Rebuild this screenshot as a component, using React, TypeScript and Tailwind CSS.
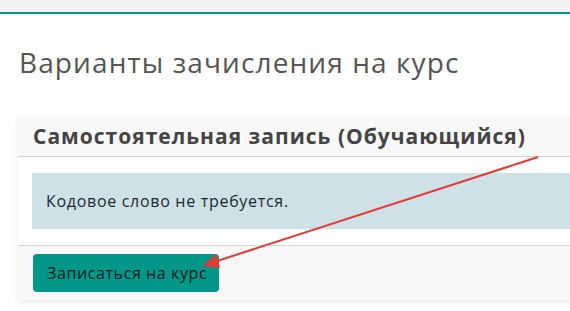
import React from 'react';

function Arrow() {
  return (
    <svg className="pointer-events-none absolute left-0 top-0" width="570" height="311" viewBox="0 0 570 311">
      <line x1="538" y1="157" x2="214" y2="262" stroke="#e53935" strokeWidth="2" />
      <polygon points="203,266 216,254 220,268" fill="#e53935" />
    </svg>
  );
}

export default function App() {
  return (
    <div className="relative h-[311px] w-[570px] overflow-hidden bg-white" style={{ fontFamily: '"Open Sans", "Noto Sans", sans-serif' }}>
      <div className="h-[14px] border-b-2 border-[#009688] bg-[#f1f1f1]" />
      <h1 className="ml-[19px] mt-[30px] text-[28px] leading-[36px] tracking-[1.1px] text-[#555]">
        Варианты зачисления на курс
      </h1>
      <div className="ml-[18px] mt-[37px] w-[600px] bg-white shadow-[0_3px_6px_rgba(0,0,0,0.08)]">
        <div className="flex h-[40px] items-center border-b border-[#cfcfcf] bg-[#f8f8f8] pl-[15px]">
          <span className="text-[21px] font-bold tracking-[1px] text-[#444]">Самостоятельная запись (Обучающийся)</span>
        </div>
        <div className="px-[14px] pb-[16px] pt-[16px]">
          <div className="flex h-[56px] items-center bg-[#cde1e6] pl-[14px] text-[16px] tracking-[0.7px] text-[#1d2a2f]">
            Кодовое слово не требуется.
          </div>
        </div>
        <div className="border-t border-[#d6d6d6] bg-[#f8f8f8] px-[15px] pb-[8px] pt-[8px]">
          <button className="h-[38px] w-[186px] rounded-[4px] bg-[#009688] pl-[14px] text-left text-[16px] tracking-[0.6px] text-[#1b1b1b]">
            Записаться на курс
          </button>
        </div>
      </div>
      <Arrow />
    </div>
  );
}
